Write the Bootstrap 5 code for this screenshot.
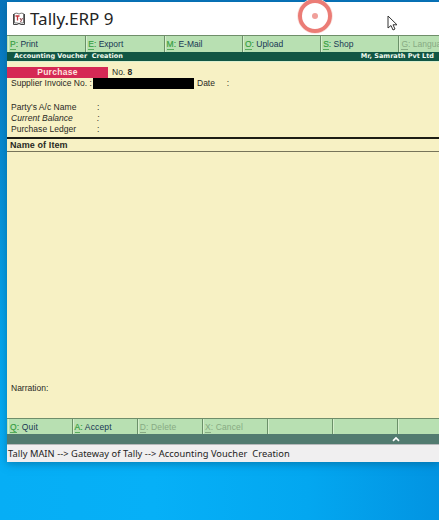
<!DOCTYPE html>
<html lang="en">
<head>
<meta charset="utf-8">
<title>Tally.ERP 9</title>
<link href="https://cdn.jsdelivr.net/npm/bootstrap@5.3.0/dist/css/bootstrap.min.css" rel="stylesheet">
<style>
html,body{height:100%}
body{font-family:"Liberation Sans",Arial,sans-serif;font-size:8.5px;line-height:11px;color:#29291f;
background:linear-gradient(90deg,#06aef5 0,#06b0f7 35%,#03a7f0 70%,#0294e2 100%)}
.desktop{height:520px;padding:2px 0 0 7px;background:linear-gradient(180deg,#0874bc 0,#078bd2 30%,rgba(3,158,230,.6) 65%,transparent 90%)}
.window{height:460px;box-shadow:0 2px 8px #0457808c;white-space:pre}
.titlebar{height:33px;background:#fff;padding-left:5px}
.app-name{font:17px/33px "Noto Sans",sans-serif;color:#242424;margin-left:4px}
.pointer-ring{left:297px;top:-2px}
.pointer-arrow{left:387px;top:15px}
.keys{background:#b8e0b2;border-top:1px solid #6f8e6a;color:#173652}
.keys-top{height:17px}
.keys-bottom{height:16px}
.key{padding:1px 0 0 2px;border-left:1px solid #6b9069;box-shadow:inset 1px 0 #d5efcd;line-height:14px;flex:none}
.key:first-child{border-left-color:transparent}
.keys-top .key{width:78.3px}
.keys-bottom .key{width:65.2px;letter-spacing:.14px}
.keys-bottom .key:first-child{width:64.5px}
.key b{color:#399e43;font-weight:400;-webkit-text-stroke:.2px #399e43}
.key b i{font-style:normal;border-bottom:1px solid #59ac5d}
.key.off,.key.off b{color:#87aa83;-webkit-text-stroke:0}
.key.off b i{border-color:#87aa83}
.heading{height:9px;background:#115643;color:#f2faef;font:bold 6.5px/9px "DejaVu Sans",sans-serif;padding:0 5px 0 7px;flex:none}
.voucher{background:#f7f1c4;border-top:1px solid #dcefcf;height:357px}
.voucher-head{margin-top:5px}
.voucher-type{width:101px;height:11px;background:#d52955;color:#ffe3df;font-weight:700;letter-spacing:.3px}
.invoice{width:86px;flex:none}
.blackout{width:101px;height:11px;background:#000}
.date{padding-left:3px}
.fields{margin-top:13px}
.field-name{width:86px;letter-spacing:.03px}
.item-head{margin-top:2px;height:15px;border-top:2px solid #1d1d14;border-bottom:1px solid #77745a;font-weight:700;font-size:9px;letter-spacing:.1px;line-height:12px;padding-left:3px}
.narration{margin-bottom:24px}
.calc{height:10px;background:#527b70}
.calc svg{margin-right:38px}
.status{height:18px;background:#f0eff0;border-top:1px solid #b7b9bb;font:9.3px/17px "Noto Sans",sans-serif;letter-spacing:.05px;padding-left:1px;color:#222}
</style>
</head>
<body class="overflow-hidden">
<main class="desktop">
<div class="window d-flex flex-column">
<header class="titlebar d-flex align-items-center flex-shrink-0"><svg width="14" height="14" viewBox="0 0 14 14" fill="none"><path d="M2.5 1.5Q5 .5 7 2Q9 .5 11.5 1.5V11Q9 10.5 7 11.5Q5 10.5 2.5 11Z" fill="#fff" stroke="#777"/><path d="M1.5 2V12.5H5L7 11.5L9 12.5H12.5V2" stroke="#444"/><path d="M3.5 4H7.5M5.5 4V8.5" stroke="#c4373c" stroke-width="1.3"/><path d="M8 6L9.3 8.5L10.5 6M9.3 8.5L8.5 10" stroke="#8d4148"/></svg><span class="app-name">Tally.ERP 9</span></header>
<nav class="keys keys-top d-flex overflow-hidden flex-shrink-0"><div class="key"><b><i>P</i>:</b> Print</div><div class="key"><b><i>E</i>:</b> Export</div><div class="key"><b><i>M</i>:</b> E-Mail</div><div class="key"><b><i>O</i>:</b> Upload</div><div class="key"><b><i>S</i>:</b> Shop</div><div class="key off"><b><i>G</i>:</b> Langua</div></nav>
<div class="heading d-flex justify-content-between"><span>Accounting Voucher  Creation</span><span>Mr, Samrath Pvt Ltd</span></div>
<section class="voucher d-flex flex-column flex-shrink-0">
<div class="voucher-head d-flex"><div class="voucher-type text-center">Purchase</div><div class="ms-1">No. <b>8</b></div></div>
<div class="d-flex"><span class="ps-1 invoice">Supplier Invoice No. :</span><div class="blackout"></div><span class="date">Date     :</span></div>
<div class="fields ps-1"><div class="d-flex"><span class="field-name">Party's A/c Name</span>:</div><div class="d-flex fst-italic"><span class="field-name">Current Balance</span>:</div><div class="d-flex"><span class="field-name">Purchase Ledger</span>:</div></div>
<div class="item-head">Name of Item</div>
<div class="mt-auto ps-1 narration">Narration:</div>
</section>
<nav class="keys keys-bottom d-flex overflow-hidden flex-shrink-0"><div class="key"><b><i>Q</i>:</b> Quit</div><div class="key"><b><i>A</i>:</b> Accept</div><div class="key off"><b><i>D</i>:</b> Delete</div><div class="key off"><b><i>X</i>:</b> Cancel</div><div class="key"></div><div class="key"></div><div class="key"></div></nav>
<div class="calc d-flex justify-content-end flex-shrink-0"><svg width="10" height="10" viewBox="0 0 10 10"><path d="M2 6.8L5 4L8 6.8" fill="none" stroke="#fff" stroke-width="1.7"/></svg></div>
<footer class="status flex-shrink-0">Tally MAIN --&gt; Gateway of Tally --&gt; Accounting Voucher  Creation</footer>
</div>
</main>
<svg class="pointer-ring position-absolute" width="36" height="36" viewBox="0 0 36 36"><circle cx="18" cy="18" r="17.3" fill="#fff" fill-opacity=".5" stroke="#f9e0dc"/><circle cx="18" cy="18" r="15" fill="#fff" stroke="#eb7c76" stroke-width="4"/><circle cx="18" cy="18" r="3" fill="#f09f9a"/></svg>
<svg class="pointer-arrow position-absolute" width="11" height="17" viewBox="0 0 11 17"><path d="M1 1V13L4 10.5L6 15L8 14L6 9.8H10Z" fill="#fff" stroke="#333"/></svg>
</body>
</html>
